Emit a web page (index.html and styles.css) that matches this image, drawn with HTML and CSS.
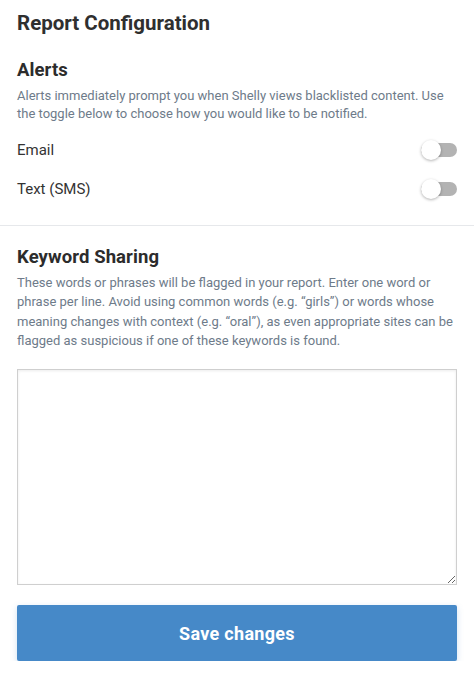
FILE: index.html
```html
<!DOCTYPE html>
<html lang="en">
<head>
<meta charset="utf-8">
<title>Report Configuration</title>
<link rel="stylesheet" href="styles.css">
</head>
<body>
<main class="page">
  <h1 class="title">Report Configuration</h1>

  <section class="section alerts">
    <h2 class="heading">Alerts</h2>
    <p class="desc desc-alerts">Alerts immediately prompt you when Shelly views blacklisted content. Use the toggle below to choose how you would like to be notified.</p>
    <div class="row">
      <span class="row-label">Email</span>
      <span class="toggle"><span class="track"></span><span class="knob"></span></span>
    </div>
    <div class="row">
      <span class="row-label">Text (SMS)</span>
      <span class="toggle"><span class="track"></span><span class="knob"></span></span>
    </div>
  </section>

  <hr class="divider">

  <section class="section keywords">
    <h2 class="heading">Keyword Sharing</h2>
    <p class="desc desc-keywords">These words or phrases will be flagged in your report. Enter one word or phrase per line. Avoid using common words (e.g. “girls”) or words whose meaning changes with context (e.g. “oral”), as even appropriate sites can be flagged as suspicious if one of these keywords is found.</p>
    <textarea class="keyword-box"></textarea>
    <button class="save" type="button">Save changes</button>
  </section>
</main>
</body>
</html>
```
FILE: styles.css
```css
* { box-sizing: border-box; }

html, body {
  margin: 0;
  padding: 0;
  background: #ffffff;
}

body {
  font-family: Roboto, "Liberation Sans", sans-serif;
  color: #2e2e2e;
}

.page {
  display: flex;
  flex-direction: column;
}

.title {
  margin: 11px 17px 0;
  font-size: 20.5px;
  line-height: 24px;
  font-weight: 700;
  color: #2f2f2f;
}

.section {
  display: flex;
  flex-direction: column;
  padding: 0 17px;
}

.alerts { padding-top: 24px; }

.heading {
  margin: 0;
  font-size: 18.5px;
  line-height: 22px;
  font-weight: 700;
  color: #2c2c2c;
  letter-spacing: 0.1px;
}

.desc {
  margin: 6px 0 0;
  font-size: 13px;
  color: #6e7b8a;
  padding-right: 4px;
}

.desc-alerts { line-height: 18px; }
.desc-keywords { line-height: 19.3px; margin-top: 5px; }

.row {
  display: flex;
  align-items: center;
  justify-content: space-between;
  height: 39px;
}

.alerts .row:first-of-type { margin-top: 7px; }

.row-label {
  font-size: 15px;
  color: #333333;
}

.toggle {
  position: relative;
  width: 36px;
  height: 20px;
  display: flex;
  align-items: center;
}

.track {
  width: 36px;
  height: 14px;
  border-radius: 7px;
  background: #b3b3b3;
}

.knob {
  position: absolute;
  left: 0;
  top: 0;
  width: 20px;
  height: 20px;
  border-radius: 50%;
  background: #ffffff;
  box-shadow: 0 1px 3px rgba(0, 0, 0, 0.3);
}

.divider {
  margin: 17px 0 0;
  border: 0;
  height: 1px;
  background: #e6e8eb;
}

.keywords { padding-top: 20px; }

.keyword-box {
  margin-top: 19px;
  width: 100%;
  height: 216px;
  border: 1px solid #cfcfcf;
  border-radius: 0;
  box-shadow: inset 0 1px 3px rgba(0, 0, 0, 0.08);
  background: #ffffff;
  resize: both;
  font-family: Roboto, "Liberation Sans", sans-serif;
}

.save {
  margin-top: 20px;
  width: 100%;
  height: 56px;
  border: 0;
  border-radius: 2px;
  background: #4689c8;
  color: #ffffff;
  font-family: Roboto, "Liberation Sans", sans-serif;
  font-size: 18px;
  font-weight: 700;
  letter-spacing: 0.3px;
  box-shadow: 0 2px 6px rgba(70, 137, 200, 0.25);
  cursor: pointer;
}
```
